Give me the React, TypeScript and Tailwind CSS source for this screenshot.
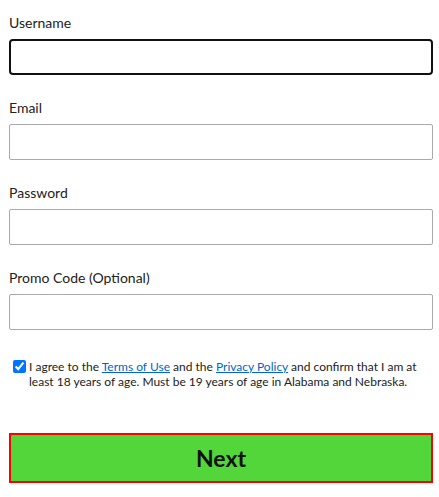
import React from "react";

const font = { fontFamily: 'Lato, "Noto Sans", Arial, sans-serif' };

function Field({ label, focused }: { label: string; focused?: boolean }) {
  return (
    <div className="flex flex-col">
      <label className="text-[14px] leading-[20px] text-[#222] mb-[6px]">{label}</label>
      <input
        className={
          focused
            ? "h-[36px] w-full border-2 border-[#111] rounded-[4px] px-2 outline-none"
            : "h-[36px] w-full border border-[#aaa] rounded-[2px] px-2 outline-none"
        }
      />
    </div>
  );
}

export default function App() {
  return (
    <div className="w-[439px] h-[497px] bg-white" style={font}>
      <div className="w-[424px] ml-[9px] pt-[13px] flex flex-col gap-[23px]">
        <Field label="Username" focused />
        <Field label="Email" />
        <Field label="Password" />
        <Field label="Promo Code (Optional)" />
      </div>
      <div className="ml-[13px] mt-[29px] w-[412px] flex items-start">
        <input
          type="checkbox"
          defaultChecked
          className="w-[13px] h-[13px] mt-[1px] shrink-0 accent-[#0075ff]"
        />
        <p className="ml-[3px] text-[12px] leading-[15px] text-[#222]">
          I agree to the{" "}
          <a href="#" className="text-[#0066cc] underline">Terms of Use</a> and the{" "}
          <a href="#" className="text-[#0066cc] underline">Privacy Policy</a> and confirm that I am at
          least 18 years of age. Must be 19 years of age in Alabama and Nebraska.
        </p>
      </div>
      <div className="ml-[9px] w-[424px] mt-[44px]">
        <button className="w-full h-[50px] bg-[#52d63a] border-2 border-[#ff0000] text-[23px] font-bold text-[#111]">
          Next
        </button>
      </div>
    </div>
  );
}
